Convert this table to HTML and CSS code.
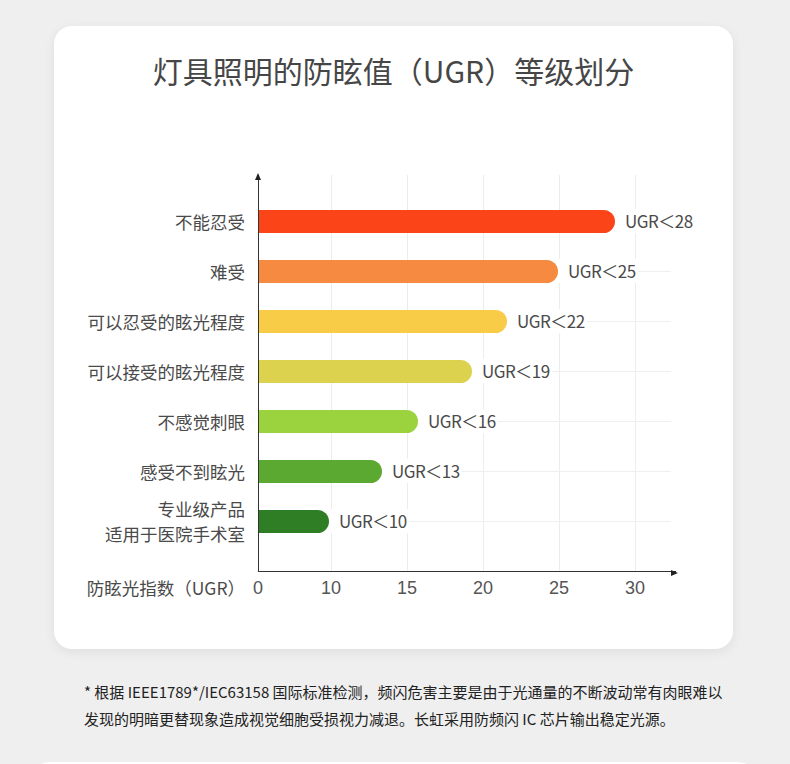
FILE: index.html
```html
<!DOCTYPE html>
<html lang="zh-CN">
<head>
<meta charset="utf-8">
<title>UGR</title>
<link rel="stylesheet" href="styles.css">
</head>
<body>
<div class="card">
  <h1 class="title">灯具照明的防眩值（UGR）等级划分</h1>
  <div class="chart">
    <div class="labels">
      <div class="label">不能忍受</div>
      <div class="label">难受</div>
      <div class="label">可以忍受的眩光程度</div>
      <div class="label">可以接受的眩光程度</div>
      <div class="label">不感觉刺眼</div>
      <div class="label">感受不到眩光</div>
      <div class="label two">专业级产品<br>适用于医院手术室</div>
    </div>
    <div class="plot">
      <div class="row"><div class="bar c1" style="width:356px"></div><span class="val">UGR＜28</span></div>
      <div class="row"><div class="bar c2" style="width:299px"></div><span class="val">UGR＜25</span></div>
      <div class="row"><div class="bar c3" style="width:248px"></div><span class="val">UGR＜22</span></div>
      <div class="row"><div class="bar c4" style="width:213px"></div><span class="val">UGR＜19</span></div>
      <div class="row"><div class="bar c5" style="width:159px"></div><span class="val">UGR＜16</span></div>
      <div class="row"><div class="bar c6" style="width:123px"></div><span class="val">UGR＜13</span></div>
      <div class="row"><div class="bar c7" style="width:70px"></div><span class="val">UGR＜10</span></div>
    </div>
  </div>
  <div class="axis-row">
    <div class="axis-title">防眩光指数（UGR）</div>
    <div class="ticks">
      <span class="tick">0</span>
      <span class="tick">10</span>
      <span class="tick">15</span>
      <span class="tick">20</span>
      <span class="tick">25</span>
      <span class="tick">30</span>
    </div>
  </div>
</div>
<p class="note">* 根据 IEEE1789*/IEC63158 国际标准检测，频闪危害主要是由于光通量的不断波动常有肉眼难以<br>发现的明暗更替现象造成视觉细胞受损视力减退。长虹采用防频闪 IC 芯片输出稳定光源。</p>
<div class="next-card"></div>
</body>
</html>
```

FILE: styles.css
```css
html, body {
  margin: 0;
  padding: 0;
  background: #efefef;
  font-family: "Noto Sans CJK SC", "Noto Sans", sans-serif;
  overflow: hidden;
}

.card {
  margin: 26px 0 0 54px;
  width: 679px;
  height: 623px;
  box-sizing: border-box;
  background: #ffffff;
  border-radius: 18px;
  box-shadow: 0 3px 12px rgba(0, 0, 0, 0.07);
  padding-top: 24px;
}

.title {
  margin: 0;
  text-align: center;
  font-size: 30px;
  line-height: 40px;
  font-weight: 400;
  color: #464646;
}

.chart {
  display: flex;
  margin-top: 85px;
}

.labels {
  width: 191px;
  box-sizing: border-box;
  padding-top: 21px;
  display: flex;
  flex-direction: column;
}

.label {
  height: 50px;
  display: flex;
  align-items: center;
  justify-content: flex-end;
  text-align: right;
  font-size: 17.5px;
  line-height: 25px;
  color: #4a4a4a;
}

.plot {
  position: relative;
  margin-left: 13px;
  width: 418px;
  height: 397px;
  box-sizing: border-box;
  padding-top: 21px;
  border-left: 1.5px solid #333;
  border-bottom: 1.5px solid #333;
  background:
    linear-gradient(#ececec, #ececec) 72px 0 / 1px 100% no-repeat,
    linear-gradient(#ececec, #ececec) 148px 0 / 1px 100% no-repeat,
    linear-gradient(#ececec, #ececec) 224px 0 / 1px 100% no-repeat,
    linear-gradient(#ececec, #ececec) 300px 0 / 1px 100% no-repeat,
    linear-gradient(#ececec, #ececec) 376px 0 / 1px 100% no-repeat;
}

.plot::before {
  content: "";
  position: absolute;
  left: -4.5px;
  top: -2px;
  border-left: 3.5px solid transparent;
  border-right: 3.5px solid transparent;
  border-bottom: 7px solid #222;
}

.plot::after {
  content: "";
  position: absolute;
  right: -2px;
  bottom: -4.5px;
  border-top: 3.5px solid transparent;
  border-bottom: 3.5px solid transparent;
  border-left: 7px solid #222;
}

.row {
  height: 50px;
  display: flex;
  align-items: center;
  background: linear-gradient(#efefef, #efefef) 0 50% / 412px 1px no-repeat;
}

.bar {
  height: 23px;
  border-radius: 0 12px 12px 0;
  flex: none;
}

.c1 { background: #fc4419; }
.c2 { background: #f58a40; }
.c3 { background: #f9cc48; }
.c4 { background: #dcd24d; }
.c5 { background: #9bd33f; }
.c6 { background: #5ca932; }
.c7 { background: #2f7d25; }

.val {
  padding-left: 10px;
  padding-right: 2px;
  background: #ffffff;
  font-size: 17px;
  letter-spacing: -0.5px;
  line-height: 24px;
  color: #4a4a4a;
  white-space: nowrap;
}

.axis-row {
  display: flex;
  margin-top: 4px;
  height: 24px;
  align-items: center;
}

.axis-title {
  width: 191px;
  text-align: right;
  font-size: 17.5px;
  line-height: 24px;
  color: #4a4a4a;
  white-space: nowrap;
}

.ticks {
  display: flex;
  margin-left: 13px;
}

.tick {
  width: 30px;
  text-align: center;
  font-family: "Liberation Sans", Arial, sans-serif;
  font-size: 18px;
  line-height: 24px;
  color: #555;
  margin-left: 46px;
}

.tick:first-child {
  margin-left: -15px;
}

.tick:nth-child(2) {
  margin-left: 43px;
}

.note {
  margin: 28.5px 0 0 84px;
  font-size: 15px;
  line-height: 27px;
  color: #222;
}

.next-card {
  margin: 30px 0 0 30px;
  width: 728px;
  height: 60px;
  background: #ffffff;
  border-radius: 20px;
}
```
